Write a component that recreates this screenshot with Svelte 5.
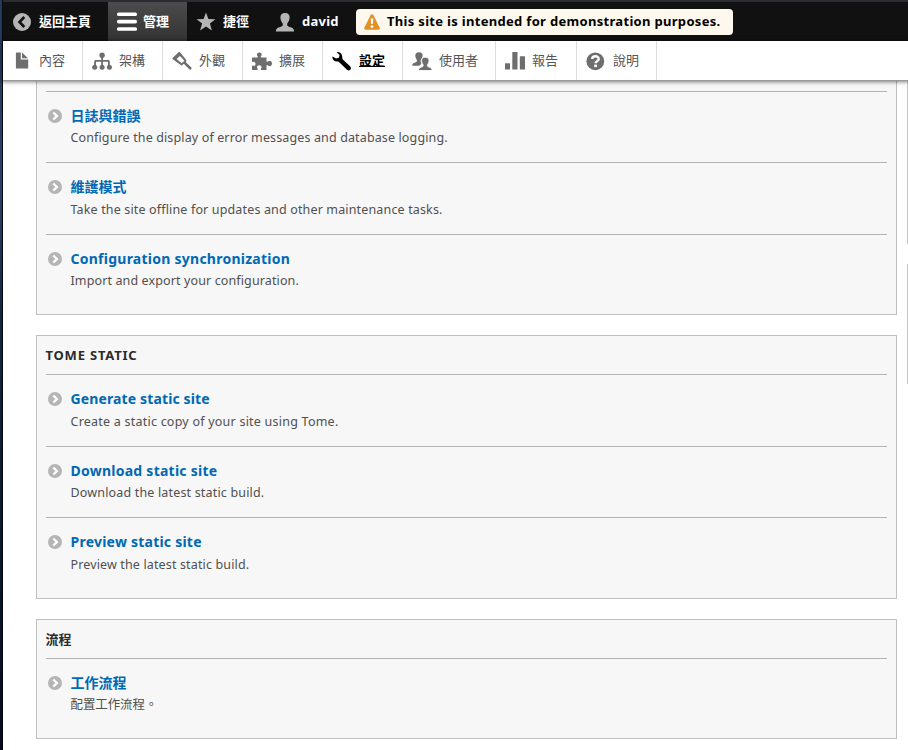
<script>
  const tray = [
    { label: '內容', icon: 'file', w: 80 },
    { label: '架構', icon: 'org', w: 80 },
    { label: '外觀', icon: 'paint', w: 80 },
    { label: '擴展', icon: 'puzzle', w: 80 },
    { label: '設定', icon: 'wrench', w: 80, active: true },
    { label: '使用者', icon: 'people', w: 93 },
    { label: '報告', icon: 'bars', w: 81 },
    { label: '說明', icon: 'help', w: 80 }
  ];

  const panels = [
    {
      title: null,
      cut: true,
      items: [
        { title: '日誌與錯誤', text: 'Configure the display of error messages and database logging.', h: 71, ls: 0.13 },
        { title: '維護模式', text: 'Take the site offline for updates and other maintenance tasks.', h: 72, ls: 0.15, low: true },
        { title: 'Configuration synchronization', text: 'Import and export your configuration.', h: 80, ls: 0.12, tls: 0.25 }
      ]
    },
    {
      title: 'TOME STATIC',
      items: [
        { title: 'Generate static site', text: 'Create a static copy of your site using Tome.', h: 72, ls: 0.23, tls: 0.13, low: true },
        { title: 'Download static site', text: 'Download the latest static build.', h: 71, ls: 0.17, tls: 0.25 },
        { title: 'Preview static site', text: 'Preview the latest static build.', h: 81, ls: 0.14, tls: 0.23, low: true }
      ]
    },
    {
      title: '流程',
      items: [{ title: '工作流程', text: '配置工作流程。', h: 80, ls: -0.1 }]
    }
  ];
</script>

{#snippet glyph(name)}
  <svg class="glyph" viewBox="0 0 20 20" width="20" height="20" aria-hidden="true">
    {#if name === 'back'}
      <circle cx="10" cy="10" r="9" />
      <path d="M12.300 5 7.500 10l4.800 5" fill="none" stroke="#111" stroke-width="2.600" />
    {:else if name === 'menu'}
      <rect x="0" y="0.500" width="20" height="3.600" rx="1.600" />
      <rect x="0" y="7.800" width="20" height="3.600" rx="1.600" />
      <rect x="0" y="15.200" width="20" height="3.600" rx="1.600" />
    {:else if name === 'star'}
      <path d="M10 .6l2.400 6.500 7 .1-5.500 4.300 2 6.900L10 14.500l-5.900 3.900 2-6.900L.6 7.200l7-.1z" />
    {:else if name === 'person'}
      <path d="M10 1c3 0 4.800 1.900 4.600 4.800-.2 2.700-1.400 4.600-2.400 5.900-.4 1.700.5 2.700 2.500 3.300 2.700.8 4.200 1.300 4.400 4.500H.9c.2-3.200 1.700-3.700 4.400-4.500 2-.6 2.900-1.600 2.500-3.300-1-1.300-2.200-3.200-2.400-5.900C5.200 2.900 7 1 10 1z" />
    {:else if name === 'file'}
      <path d="M4.500 1.500h4.300v7h7.400v8.500a.6.6 0 0 1-.6.600H4.500a.6.6 0 0 1-.6-.6v-15zM10 1.500l6 5.800h-6z" />
    {:else if name === 'org'}
      <path d="M9.200 6h1.800v3h5.300c.9 0 1.500.6 1.500 1.500V15H16v-4.200h-5V15H9.200v-4.200H4V15H2.200v-4.500C2.200 9.600 2.800 9 3.700 9h5.500z" />
      <circle cx="10.100" cy="4.300" r="2.700" /><circle cx="2.700" cy="16.200" r="2.500" /><circle cx="10.100" cy="16.200" r="2.500" /><circle cx="17.400" cy="16.200" r="2.500" />
    {:else if name === 'paint'}
      <path d="M.5 7 6.600 1.200c.5-.4 1-.3 1.400.1l6.300 7.800c.3.4.3.8 0 1.200l-4.100 3.900c-.4.300-.8.300-1.200 0L.8 8.200C.4 7.800.2 7.400.5 7z" />
      <path d="m7.900 4.900 4.500 4.800-2.700 2.600-5.100-4.200z" fill="#fff" />
      <path d="m12.700 11.900 5.500 5.400" fill="none" stroke="#6e6e6e" stroke-width="2.600" stroke-linecap="round" />
    {:else if name === 'puzzle'}
      <path d="M0 6.500h5.300c.7 0 .7-.7.3-1.200-1.600-2 0-3.800 1.700-3.800s3.300 1.800 1.700 3.800c-.4.500-.4 1.200.3 1.200h5.200v3.600c0 .9.700 1 1.200.5 1.700-1.600 4.300-.6 4.300 1.900s-2.600 3.500-4.300 1.900c-.5-.5-1.200-.4-1.200.5v4H9.400c-.7 0-.8-.6-.4-1.200 1.300-1.800.2-3.400-1.700-3.400s-3 1.600-1.700 3.400c.4.600.3 1.200-.4 1.200H0v-3.800c0-.7.500-.8 1-.5 1.400.8 2.500-.2 2.500-1.700S2.400 10.200 1 11c-.5.300-1 .2-1-.5z" />
    {:else if name === 'wrench'}
      <path d="M.6 5.500c-.8 2.800 1.600 5.400 4.800 5.100.9-.1 1.500.2 2.100.8l7.200 7.200c1.100 1.100 2.700 1 3.600.1s.9-2.500-.2-3.500l-7-6.500c-.6-.6-.9-1.200-.8-2.100C10.500 3 8 .5 4.600 1l3 3-.7 2.800-2.900.8z" />
    {:else if name === 'people'}
      <path d="M7 1.200c2.600 0 3.900 1.700 3.600 3.900-.1 1.200-.8 2.300-1.400 3-.9 1.400-.6 3.800.3 4.900-1.400.6-1.900 1.300-2 1.800H.3c0-2.200.8-2.800 3-3.400 1.600-.4 2-1.500 1.400-2.700-.7-.9-1.300-2.200-1.400-3.600C3.100 2.900 4.500 1.200 7 1.200z" />
      <path d="M13.300 6.200c2.700 0 4 1.700 3.700 4-.2 1.500-.8 2.500-1.500 3.500-.4 1.200 0 2 1.500 2.400 2 .6 3 1.300 3 3.400H6.500c0-2.100 1-2.800 3-3.400 1.600-.4 2-1.200 1.600-2.400-.7-1-1.300-2-1.500-3.500-.3-2.300 1-4 3.700-4z" stroke="#fff" stroke-width=".8" />
    {:else if name === 'bars'}
      <rect x="0" y="12.300" width="5" height="6.200" rx=".5" /><rect x="7.300" y="1" width="5.200" height="17.500" rx=".5" /><rect x="14.800" y="5.300" width="5.200" height="13.200" rx=".5" />
    {:else if name === 'help'}
      <circle cx="9.300" cy="10.300" r="8.900" />
      <path d="M6.200 8.100c0-3.900 6.500-3.800 6.500-.2 0 2.200-3.100 2.300-3.100 4.300" fill="none" stroke="#fff" stroke-width="2.400" />
      <rect x="8.200" y="13.600" width="2.700" height="2.500" fill="#fff" />
    {/if}
  </svg>
{/snippet}

<div class="frame">
  <div class="edge"></div>
  <div class="page">
    <nav class="bar">
      <div class="tab home">{@render glyph('back')}<span>返回主頁</span></div>
      <div class="tab manage">{@render glyph('menu')}<span>管理</span></div>
      <div class="tab short">{@render glyph('star')}<span>捷徑</span></div>
      <div class="tab user">{@render glyph('person')}<span>david</span></div>
      <div class="notice">
        <svg viewBox="0 0 16 16" width="16" height="16" aria-hidden="true">
          <path d="M8 .3c.7 0 1.200.4 1.500 1l6.100 12.300c.6 1.100.1 2.100-1.100 2.100h-13c-1.200 0-1.700-1-1.100-2.100L6.500 1.300C6.800.7 7.300.3 8 .3z" fill="#e29126" />
          <path d="M6.700 4.500h2.600l-.5 5.500H7.200z" fill="#fff" /><circle cx="8" cy="12.600" r="1.400" fill="#fff" />
        </svg>
        <span>This site is intended for demonstration purposes.</span>
      </div>
    </nav>
    <nav class="tray">
      {#each tray as t}
        <div class="link" class:active={t.active} style="width: {t.w}px">{@render glyph(t.icon)}<span>{t.label}</span></div>
      {/each}
    </nav>
    <main>
      <div class="column">
        {#each panels as p}
          <section class:cut={p.cut}>
            {#if p.title}<h3>{p.title}</h3>{/if}
            <ul>
              {#each p.items as item}
                <li style="height: {item.h}px">
                  <svg viewBox="0 0 14 14" width="14" height="14" aria-hidden="true">
                    <circle cx="7" cy="7" r="7" fill="#b5b5b5" />
                    <path d="M5.300 3.500 8.900 7l-3.600 3.500" fill="none" stroke="#fff" stroke-width="2.300" />
                  </svg>
                  <div>
                    <a href="#top" style="letter-spacing: {item.tls ?? 0}px">{item.title}</a>
                    <p class:low={item.low} style="letter-spacing: {item.ls}px">{item.text}</p>
                  </div>
                </li>
              {/each}
            </ul>
          </section>
        {/each}
      </div>
      <div class="next">
        <div class="slice one"></div>
        <div class="slice two"></div>
      </div>
    </main>
  </div>
</div>

<style>
  :global(body) { margin: 0; overflow: hidden; }
  .frame {
    display: flex;
    width: 908px;
    height: 750px;
    overflow: hidden;
    background: #fff;
    font-family: 'Lucida Grande', 'Noto Sans', 'Noto Sans CJK TC', sans-serif;
    font-size: 13px;
  }
  .edge {
    flex: none;
    box-sizing: border-box;
    width: 3px;
    border-right: 1px solid #05070a;
    background: linear-gradient(#23395d, #2a4268 25%, #142441 42%, #0b1834 70%, #030a20);
  }
  .page { flex: 1; min-width: 0; }
  .bar {
    display: flex;
    box-sizing: border-box;
    height: 41px;
    border-top: 2px solid #2b2d33;
    background: #111;
    color: #fff;
    font-weight: 700;
  }
  .tab { display: flex; align-items: center; box-sizing: border-box; height: 39px; line-height: 20px; }
  .tab span, .link span, .notice span { padding-bottom: 2px; }
  .tab .glyph { fill: #b5b5b5; }
  .home { width: 105px; padding-left: 9px; gap: 7px; }
  .manage { width: 79px; padding-left: 9px; gap: 6px; background: linear-gradient(#4c4c4c, #333); }
  .manage .glyph { fill: #fff; }
  .short { width: 79px; padding-left: 9px; gap: 7px; }
  .user { width: 87px; padding-left: 9px; gap: 7px; letter-spacing: 0.25px; }
  .glyph { flex: none; }
  .notice {
    display: flex;
    align-items: center;
    box-sizing: border-box;
    width: 377px;
    height: 26px;
    margin: 7px 0 0 3px;
    padding-left: 8px;
    gap: 7px;
    border-radius: 4px;
    background: #fdf8ed;
    color: #000;
    letter-spacing: 0.31px;
    white-space: nowrap;
  }
  .tray {
    display: flex;
    position: relative;
    z-index: 1;
    height: 39px;
    background: #fff;
    box-shadow: 0 1px 0 #999, 0 1px 4px 1px rgba(0, 0, 0, 0.5);
    color: #565656;
  }
  .link {
    display: flex;
    align-items: center;
    box-sizing: border-box;
    padding-left: 9px;
    gap: 7px;
    border-right: 1px solid #ddd;
  }
  .link .glyph { fill: #6e6e6e; }
  .link.active { color: #000; font-weight: 700; }
  .link.active span { text-decoration: underline; }
  .link.active .glyph { fill: #000; }
  main { display: flex; gap: 10px; padding-left: 33px; }
  .column { flex: none; display: flex; flex-direction: column; gap: 20px; width: 861px; }
  section {
    box-sizing: border-box;
    padding: 0 9px;
    border: 1px solid #bfbfbf;
    background: #f7f7f7;
  }
  .cut { padding-top: 11px; border-top: 0; }
  h3 {
    height: 38px;
    margin: 0 0 0 -0.500px;
    color: #2b2b2b;
    font-size: 13px;
    font-weight: 700;
    line-height: 39px;
  }
  section:nth-child(2) h3 { letter-spacing: 0.8px; }
  ul { margin: 0; padding: 0; list-style: none; }
  li { display: flex; box-sizing: border-box; border-top: 1px solid #b3b3b3; padding: 17px 0 0 2px; gap: 8.500px; }
  li svg { flex: none; }
  a {
    display: block;
    height: 21px;
    margin-top: -4px;
    color: #0069b3;
    font-size: 14px;
    font-weight: 700;
    line-height: 21px;
    text-decoration: none;
    white-space: nowrap;
  }
  p { margin: 2px 0 0; color: #505050; font-size: 12.500px; line-height: 20px; white-space: nowrap; }
  p.low { margin-top: 3px; }
  .next { flex: none; width: 1px; display: flex; flex-direction: column; gap: 20px; }
  .slice { background: #c4c4c4; }
  .one { height: 164px; }
  .two { height: 120px; }
</style>
